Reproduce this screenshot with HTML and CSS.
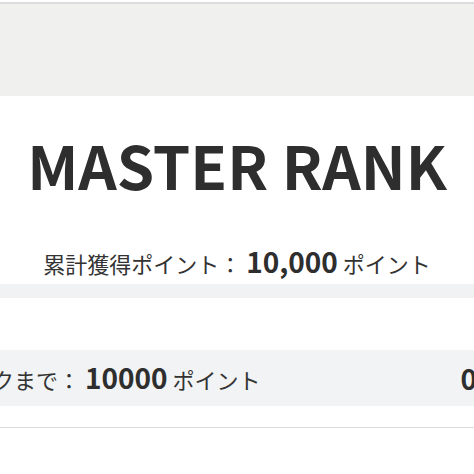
FILE: index.html
```html
<!DOCTYPE html>
<html lang="ja">
<head>
<meta charset="utf-8">
<link rel="stylesheet" href="styles.css">
</head>
<body>
<div class="page">
  <div class="header"></div>
  <section class="rank">
    <h1 class="rank-title">MASTER RANK</h1>
    <p class="rank-points">累計獲得ポイント： <strong>10,000</strong> ポイント</p>
  </section>
  <div class="band"></div>
  <div class="next-row">
    <p class="next-text">次のランクまで： <strong>10000</strong> ポイント</p>
    <p class="next-rate">0%</p>
  </div>
  <div class="rule"></div>
</div>
</body>
</html>
```
FILE: styles.css
```css
html, body {
  margin: 0;
  padding: 0;
  background: #ffffff;
  overflow: hidden;
}
body {
  font-family: "Noto Sans CJK JP", "Noto Sans", sans-serif;
  color: #333333;
}
.page {
  width: 474px;
  overflow: hidden;
  padding-top: 2px;
}
.header {
  height: 92px;
  border-top: 2px solid #dcdcdc;
  background: #f0f0ef;
}
.rank {
  text-align: center;
  padding-top: 33px;
}
.rank-title {
  margin: 0;
  font-size: 60px;
  line-height: 70px;
  font-weight: 700;
  color: #2e2e2e;
}
.rank-points {
  margin: 47px 0 0;
  font-size: 22px;
  line-height: 30px;
  color: #333;
}
.rank-points strong {
  font-size: 28px;
  font-weight: 700;
  color: #2e2e2e;
}
.band {
  margin-top: 6px;
  height: 14px;
  background: #f1f2f3;
}
.next-row {
  margin: 52px -30px 0 -96px;
  height: 56px;
  background: #f2f3f4;
  display: flex;
  align-items: center;
  justify-content: space-between;
}
.next-text, .next-rate {
  margin: 0;
  font-size: 22px;
  line-height: 30px;
  color: #333;
}
.next-text strong, .next-rate {
  font-size: 28px;
  font-weight: 700;
  color: #2e2e2e;
}
.rule {
  margin-top: 21px;
  height: 1px;
  background: #dcdcdc;
}
```
